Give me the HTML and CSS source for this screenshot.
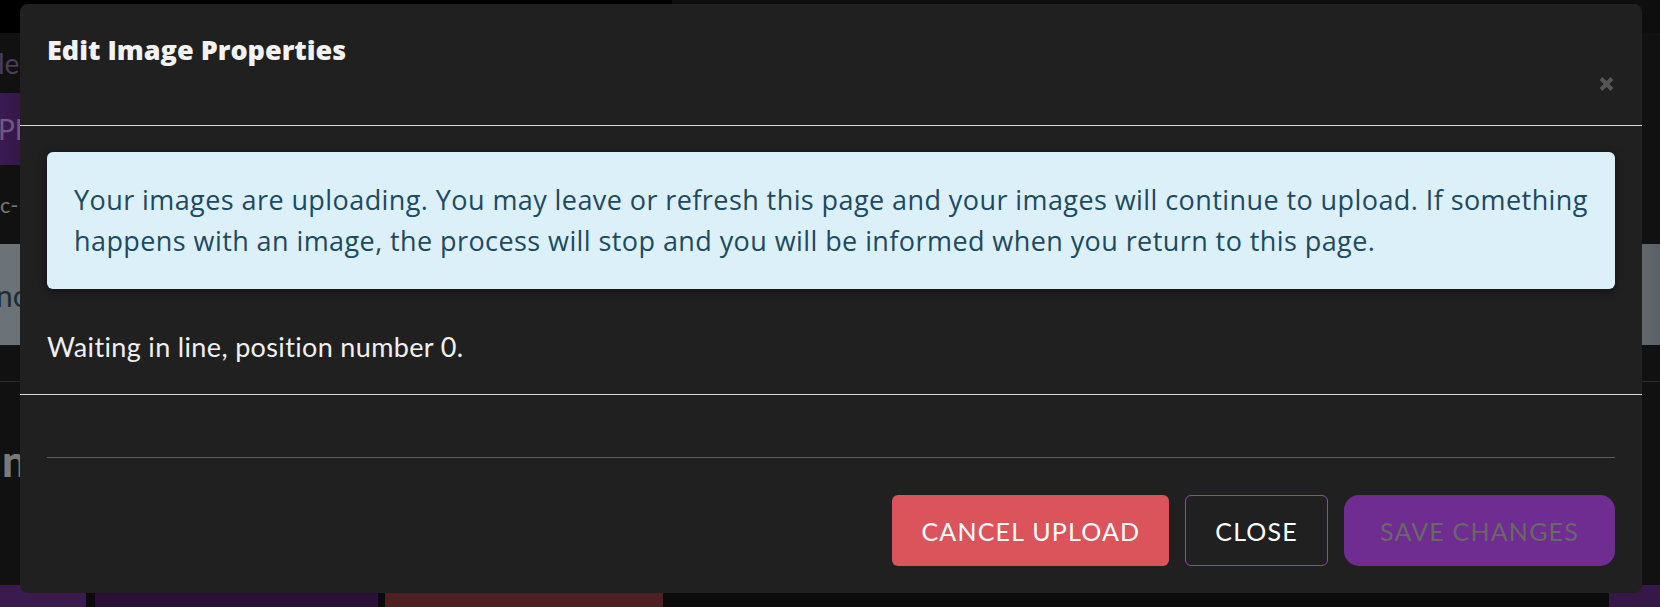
FILE: index.html
```html
<!DOCTYPE html>
<html lang="en">
<head>
<meta charset="utf-8">
<title>Edit Image Properties</title>
<link rel="stylesheet" href="styles.css">
</head>
<body>
<div class="page">
  <div class="topbar"><div class="topbar-left"></div><div class="topbar-right"></div></div>
  <div class="row row-titles"><span class="ghost-title">les</span></div>
  <div class="row row-button"><span class="ghost-btn">PP</span></div>
  <div class="row row-code"><span class="ghost-code">c-</span></div>
  <div class="row row-gray"><span class="ghost-gray">no</span></div>
  <div class="row row-sep"></div>
  <div class="row row-bold"><span class="ghost-bold">n</span></div>
  <div class="row row-bottom">
    <div class="blk blk-purple"></div>
    <div class="blk blk-dpurple"></div>
    <div class="blk blk-red"></div>
    <div class="blk blk-fill"></div>
    <div class="blk blk-purple2"></div>
  </div>
</div>

<div class="modal">
  <div class="modal-header">
    <h5 class="modal-title">Edit Image Properties</h5>
    <button class="close" aria-label="Close">
      <svg width="15" height="16" viewBox="0 0 15 16"><path d="M2 2.5 L13 13.5 M13 2.5 L2 13.5" stroke="#555" stroke-width="4" stroke-linecap="butt"/></svg>
    </button>
  </div>
  <div class="modal-body">
    <div class="alert">Your images are uploading. You may leave or refresh this page and your images will continue to upload. If something<br>happens with an image, the process will stop and you will be informed when you return to this page.</div>
    <p class="status">Waiting in line, position number 0.</p>
  </div>
  <div class="modal-footer">
    <div class="footer-space"></div>
    <div class="actions">
      <button class="btn btn-cancel">CANCEL UPLOAD</button>
      <button class="btn btn-close">CLOSE</button>
      <button class="btn btn-save">SAVE CHANGES</button>
    </div>
  </div>
</div>
</body>
</html>
```

FILE: styles.css
```css
html, body {
  margin: 0;
  padding: 0;
  background: #0b0b0b;
  width: 1660px;
  height: 607px;
  overflow: hidden;
  font-family: Lato, "Open Sans", sans-serif;
}

.page {
  display: flex;
  flex-direction: column;
  width: 1660px;
  height: 607px;
}

.topbar { display: flex; height: 33px; flex: none; }
.topbar-left { width: 672px; background: #000; }
.topbar-right { flex: 1; background: #0e0e0e; }

.row { flex: none; display: flex; align-items: center; background: #111; overflow: hidden; }
.row-titles { height: 60px; }
.ghost-title { font-size: 28px; color: #4d3b5e; margin-left: -2px; }
.row-button { height: 72px; background: linear-gradient(90deg, #3a1a52 0, #2e1640 40px, #111 40px); }
.ghost-btn { font-size: 28px; color: #6e5a80; margin-left: -2px; }
.row-code { height: 79px; }
.ghost-code { font-size: 22px; color: #777; margin-left: 0; }
.row-gray { height: 101px; background: linear-gradient(90deg, #6b7278 0, #6b7278 1620px, #5a6065 1660px); }
.ghost-gray { font-size: 30px; color: #1f2c36; margin-left: -4px; }
.row-sep { height: 36px; border-bottom: 1px solid #2c2c2c; }
.row-bold { height: 203px; align-items: flex-start; }
.ghost-bold { font-size: 44px; font-weight: 900; color: #7a7a7a; margin: 52px 0 0 2px; }
.row-bottom { height: 22px; background: #0b0b0b; align-items: stretch; }
.blk { height: 22px; }
.blk-purple { width: 86px; background: #3b1a50; margin-right: 9px; }
.blk-dpurple { width: 283px; background: #2a1036; margin-right: 7px; }
.blk-red { width: 278px; background: #4f1f22; }
.blk-fill { flex: 1; }
.blk-purple2 { width: 51px; background: #351848; }

/* modal overlay */
.modal {
  position: absolute;
  left: 20px;
  top: 4px;
  width: 1622px;
  height: 589px;
  box-sizing: border-box;
  background: #202020;
  border-radius: 8px;
  display: flex;
  flex-direction: column;
  color: #eee;
}

.modal-header {
  display: flex;
  justify-content: space-between;
  align-items: flex-start;
  height: 122px;
  box-sizing: border-box;
  padding: 29px 28px 0 27px;
  border-bottom: 1px solid #d8d8d8;
}

.modal-title {
  margin: 0;
  font-family: "Open Sans", Lato, sans-serif;
  font-size: 27px;
  line-height: 34px;
  font-weight: 800;
  color: #f2f2f2;
}

.close {
  background: none;
  border: 0;
  padding: 0;
  margin: 43px 0 0 0;
  width: 15px;
  height: 16px;
  display: block;
}
.close svg { display: block; }

.modal-body {
  padding: 26px 27px 27px 27px;
  border-bottom: 1px solid #d8d8d8;
}

.alert {
  background: #dcf0f9;
  color: #1d4a5f;
  border-radius: 6px;
  padding: 27px 27px 28px 27px;
  font-family: "Open Sans", Lato, sans-serif;
  font-size: 27px;
  letter-spacing: 0.42px;
  line-height: 41px;
  box-shadow: 0 2px 8px rgba(0, 0, 0, 0.45);
  white-space: nowrap;
}

.status {
  margin: 37px 0 0 0;
  font-size: 27px;
  line-height: 41px;
  letter-spacing: 0.35px;
  color: #f0f0f0;
}

.modal-footer {
  padding: 0 27px 26px 27px;
  display: flex;
  flex-direction: column;
}

.footer-space {
  height: 62px;
  border-bottom: 1px solid #5c5c5c;
}

.actions {
  display: flex;
  justify-content: flex-end;
  gap: 16px;
  margin-top: 37px;
}

.btn {
  height: 71px;
  padding: 0 28px;
  font-family: Lato, "Open Sans", sans-serif;
  font-size: 25px;
  letter-spacing: 1.2px;
  border-radius: 6px;
  border: 1px solid transparent;
  box-sizing: border-box;
}

.btn-cancel { background: #db535b; color: #fff; }
.btn-close { background: transparent; color: #fff; border-color: #8c48ae; padding: 0 29px; }
.btn-save { background: #6f2c91; color: #686868; border-radius: 15px; padding: 0 35px; }
```
